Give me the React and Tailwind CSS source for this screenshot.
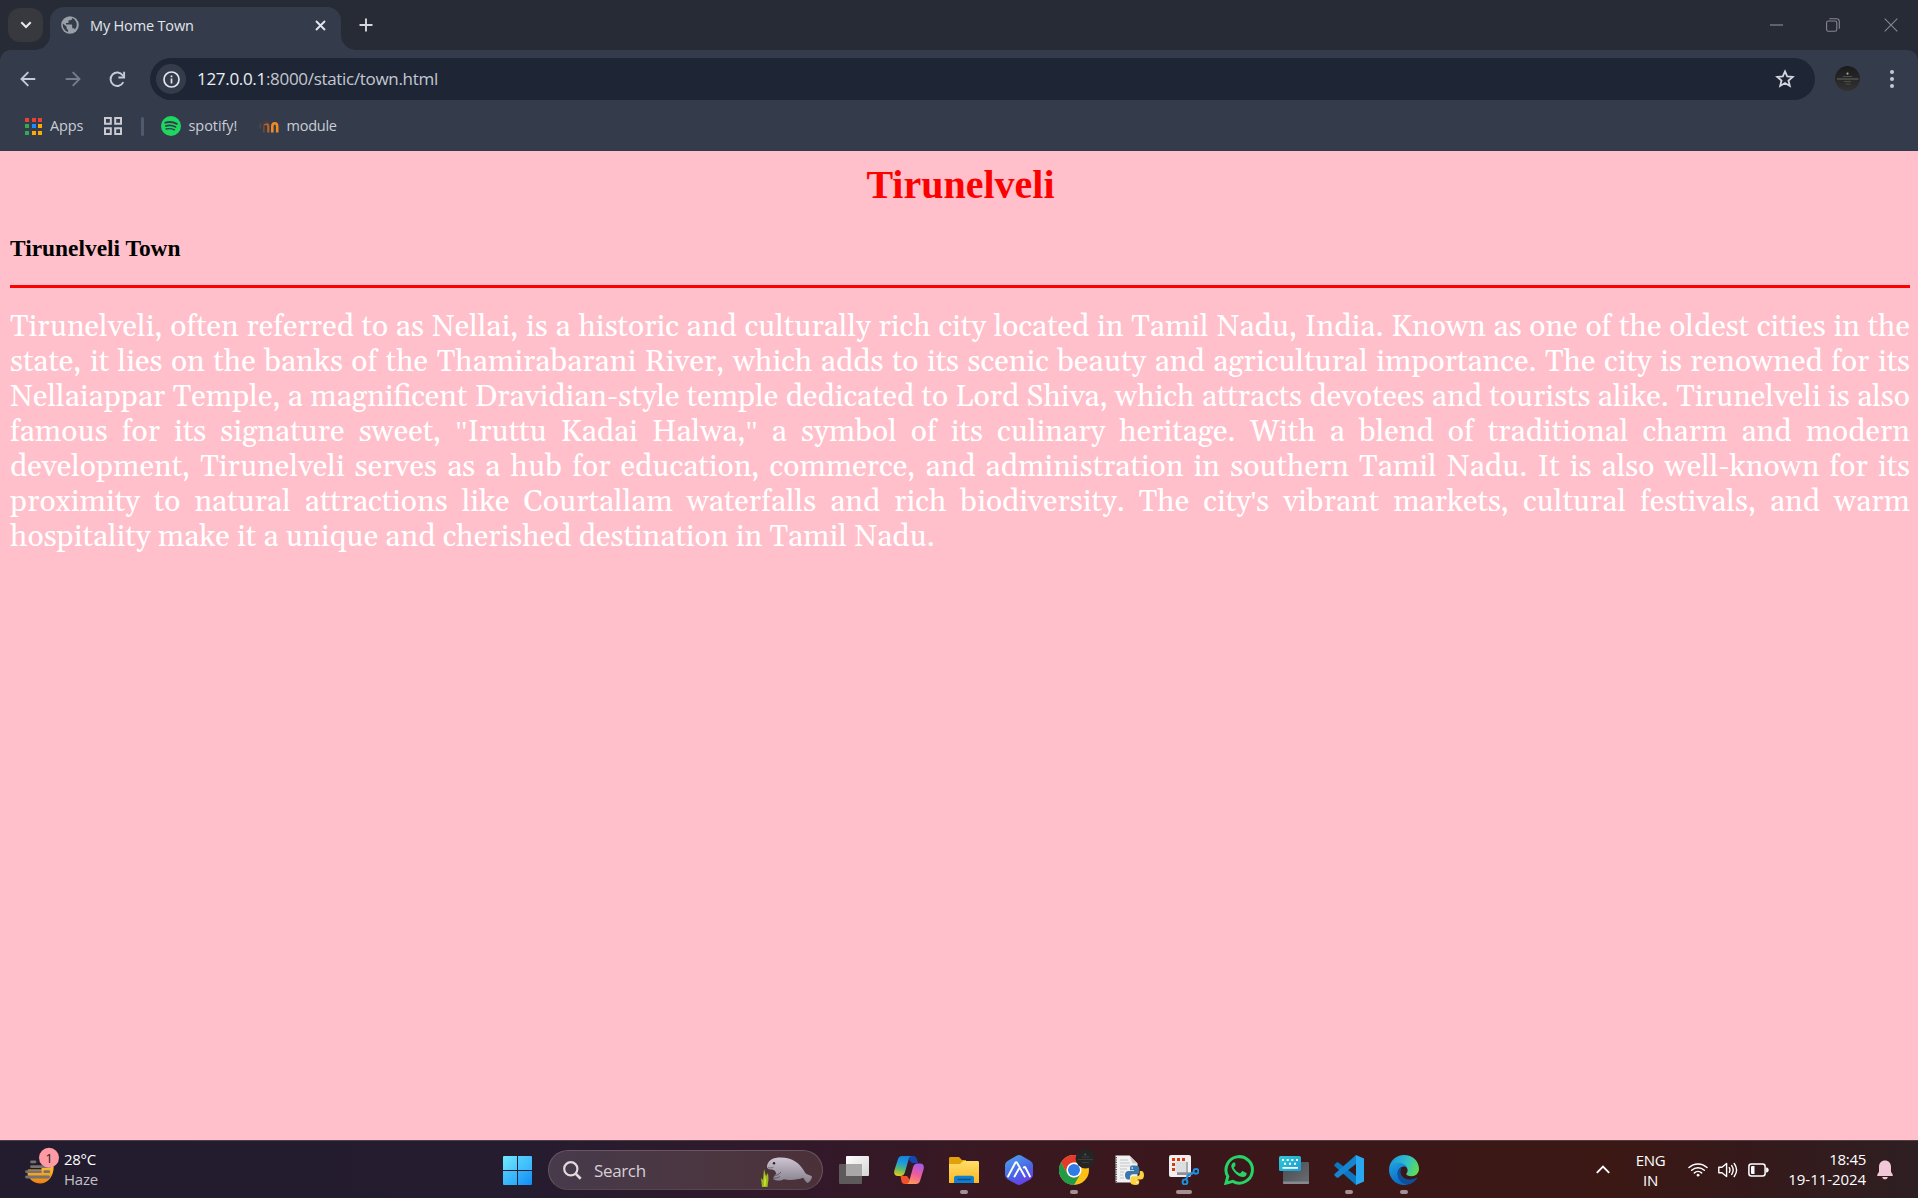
import React from "react";

const UI = "font-['Open_Sans','Noto_Sans',sans-serif] whitespace-nowrap";

function Globe() {
  return (
    <svg width="18" height="18" viewBox="0 0 18 18">
      <circle cx="9" cy="9" r="8.8" fill="#9aa0a6" />
      <path
        d="M2 7.6l3.6 3.2v1.4c0 .9.7 1.4 1.5 1.5v2.4A7.3 7.3 0 0 1 2 7.6zM11.2 2c-.1 1.500-.8 2.200-2 2.200H7.600v1.700c0 .6-.5 1-1.100 1H5v1.700h5c.7 0 1.200.5 1.200 1.200v2.500h1c.8 0 1.500.5 1.700 1.300A7.300 7.300 0 0 0 11.200 2z"
        fill="#343c4c"
      />
    </svg>
  );
}

function TabStrip() {
  return (
    <div className="h-[50px] flex bg-[#262b36] text-[#e3e5ea]">
      <div className="mt-2 ml-2 w-[35px] h-[34px] rounded-[12px] bg-[#38393f] flex items-center justify-center">
        <svg width="12" height="8" viewBox="0 0 12 8" fill="none" stroke="#e6e8ec" strokeWidth="2.1">
          <path d="M1.300 1.200L6 5.900l4.700-4.700" />
        </svg>
      </div>
      <svg width="15" height="15" viewBox="0 0 15 15" className="mt-[35px] -ml-[8px]">
        <path d="M15 0v15H0A15 15 0 0 0 15 0z" fill="#343c4c" />
      </svg>
      <div className="mt-[7px] h-[43px] w-[291px] rounded-t-[14px] bg-[#343c4c] flex items-center pb-[7px]">
        <div className="ml-[11px]">
          <Globe />
        </div>
        <div className={`${UI} ml-[11px] flex-1 text-[14.500px] tracking-[-0.160px] leading-5 mt-px`}>My Home Town</div>
        <svg width="11" height="11" viewBox="0 0 11 11" className="mr-[15px]" stroke="#e3e5ea" strokeWidth="1.900">
          <path d="M1 1l9 9M10 1l-9 9" />
        </svg>
      </div>
      <svg width="15" height="15" viewBox="0 0 15 15" className="mt-[35px]">
        <path d="M0 0v15h15A15 15 0 0 1 0 0z" fill="#343c4c" />
      </svg>
      <svg width="14" height="14" viewBox="0 0 14 14" className="mt-[18px] ml-[3px]" stroke="#d6d8de" strokeWidth="1.900">
        <path d="M7 .5v13M.5 7h13" />
      </svg>
      <div className="ml-auto mt-[17px] flex items-center h-[15px] mr-[20px]">
        <svg width="13" height="2" className="mr-[43px]">
          <path d="M0 1h13" stroke="#85888f" strokeWidth="1.200" />
        </svg>
        <svg width="14" height="14" viewBox="0 0 14 14" fill="none" stroke="#85888f" strokeWidth="1.100" className="mr-[44px]">
          <rect x=".6" y="3" width="10.200" height="10.200" rx="1.800" />
          <path d="M3.300.7h7.200a2.800 2.800 0 0 1 2.800 2.800v7.200" />
        </svg>
        <svg width="14" height="14" viewBox="0 0 14 14" stroke="#85888f" strokeWidth="1.100">
          <path d="M.7.7l12.600 12.600M13.300.7L.7 13.300" />
        </svg>
      </div>
    </div>
  );
}

function AddressRow() {
  return (
    <div className="h-[54px] pt-2 bg-[#343c4c] rounded-t-[11px]">
      <div className="flex items-center h-[42px] w-full">
        <svg width="16" height="16" viewBox="0 0 16 16" fill="none" stroke="#c3cad9" strokeWidth="1.900" className="ml-[19.500px]">
          <path d="M15.300 8H2M8.300 1.200L1.500 8l6.800 6.800" />
        </svg>
        <svg width="16" height="16" viewBox="0 0 16 16" fill="none" stroke="#767d8b" strokeWidth="1.900" className="ml-[29px]">
          <path d="M.7 8H14M7.700 1.200L14.500 8l-6.800 6.800" />
        </svg>
        <svg width="17" height="17" viewBox="0 0 17 17" fill="none" stroke="#c3cad9" strokeWidth="1.900" className="ml-[28.500px]">
          <path d="M14.300 11.200A6.700 6.700 0 1 1 13.700 4.300L15 6" />
          <path d="M15.100.8v5.700H9.400" />
        </svg>
        <div className="ml-[24px] w-[1665px] h-[42px] rounded-full bg-[#1e2636] flex items-center">
          <div className="ml-[6px] w-[30px] h-[30px] rounded-full bg-[#343c4c] flex items-center justify-center">
            <svg width="17" height="17" viewBox="0 0 17 17" fill="none" stroke="#e3e5ea" strokeWidth="1.700">
              <circle cx="8.500" cy="8.500" r="7.500" />
              <path d="M8.500 7.600v4.900M8.500 4.500v1.800" />
            </svg>
          </div>
          <div className={`${UI} ml-[11px] flex-1 text-[17px] tracking-[-0.310px] leading-6 text-[#c4c8d0]`}>
            <span className="text-[#eceef2]">127.0.0.1</span>:8000/static/town.html
          </div>
          <svg width="20" height="20" viewBox="0 0 20 20" fill="none" stroke="#d3d7df" strokeWidth="1.800" className="mr-[20px]">
            <path d="M10 2.400l2.200 5 5.500.5-4.200 3.600 1.300 5.400L10 14l-4.800 2.900 1.300-5.400-4.200-3.600 5.500-.5z" />
          </svg>
        </div>
        <svg width="26" height="26" viewBox="0 0 26 26" className="ml-[20px]">
          <defs>
            <linearGradient id="avatar" x1="0" y1="0" x2="0" y2="1">
              <stop offset="0" stopColor="#1b1b1c" />
              <stop offset="1" stopColor="#323232" />
            </linearGradient>
          </defs>
          <circle cx="12.500" cy="12.500" r="12.500" fill="url(#avatar)" />
          <path d="M2 13h21.500" stroke="#666" strokeWidth="1" />
          <path d="M8 10.500h9M9 15.500h7M10.500 18h5" stroke="#4c4c4c" strokeWidth="1" />
          <circle cx="12.500" cy="7.600" r="1.100" fill="#aaa" />
        </svg>
        <svg width="4" height="18" viewBox="0 0 4 18" fill="#c0c9db" className="ml-[29px]">
          <circle cx="2" cy="2" r="2" />
          <circle cx="2" cy="9" r="2" />
          <circle cx="2" cy="16" r="2" />
        </svg>
      </div>
    </div>
  );
}

const appDots = ["#ea4335", "#ea4335", "#ea4335", "#34a853", "#1a8cff", "#fbab04", "#34a853", "#fbab04", "#fbab04"];

function BookmarksBar() {
  const label = `${UI} text-[14.500px] leading-5 text-[#c9cdd6]`;
  return (
    <div className="h-[47px] flex items-center bg-[#343c4c] pb-[3px] pl-[25px]">
      <div className="grid grid-cols-3 gap-[2.500px] w-[17px] h-[17px]">
        {appDots.map((c, i) => (
          <div key={i} className="w-[4px] h-[4px]" style={{ backgroundColor: c }} />
        ))}
      </div>
      <div className={`${label} ml-[8px] w-[54px] tracking-[-0.150px]`}>Apps</div>
      <svg width="18" height="18" viewBox="0 0 18 18" fill="none" stroke="#c9cad2" strokeWidth="2">
        <path d="M1 1h5.800v5.800H1zM11.200 1H17v5.800h-5.800zM1 11.200h5.800V17H1zM11.200 11.200H17V17h-5.800z" />
      </svg>
      <div className="ml-[19px] w-[3px] h-[19px] rounded-full bg-[#505a6e]" />
      <svg width="20" height="20" viewBox="0 0 20 20" fill="none" stroke="#343c4c" strokeLinecap="round" className="ml-[17px]">
        <circle cx="10" cy="10" r="10" fill="#1ed760" stroke="none" />
        <path d="M4.300 6.700c4-1.200 8-.8 11.500 1.100" strokeWidth="1.900" />
        <path d="M4.700 10c3.500-1 7-.6 9.900 1" strokeWidth="1.600" />
        <path d="M5 13c3-.8 5.900-.5 8.500.9" strokeWidth="1.300" />
      </svg>
      <div className={`${label} ml-[7.500px] w-[70.500px] tracking-[-0.060px]`}>spotify!</div>
      <svg width="20" height="14" viewBox="0 0 20 14" fill="none">
        <path d="M4.800 13.500V6" stroke="#6e4a36" strokeWidth="1.600" />
        <path d="M5 5.600c2.500-1.600 4.300-.6 4.300 2v5.900" stroke="#b5652c" strokeWidth="2.200" />
        <path d="M13.300 13.500V7.400c0-2 .9-3.100 2.400-3.100s2.500 1.100 2.500 3.100v6.100" stroke="#f08a24" strokeWidth="2.600" />
        <path d="M.8 4.500L6.500 1l5 .6-2 2.200-4.600 1.500z" fill="#463a3e" />
        <path d="M1.200 4.500v5" stroke="#62504c" strokeWidth=".9" />
      </svg>
      <div className={`${label} ml-[7.500px] tracking-[-0.250px]`}>module</div>
    </div>
  );
}

function Straight({ children }) {
  return <span className="font-['Liberation_Serif',serif] leading-none">{children}</span>;
}

function Page() {
  return (
    <main className="h-[989px] bg-[#ffc0cb] px-[10px] pt-[11px] font-['Liberation_Serif',serif]">
      <h1 className="h-[46px] text-center text-[40px] leading-[46px] font-bold text-[#ff0000] pl-[3px]">Tirunelveli</h1>
      <h3 className="mt-[27px] h-[27px] text-[23.400px] leading-[27px] font-bold text-black">Tirunelveli Town</h3>
      <div className="mt-[23px] h-[3px] w-[1900px] bg-[#ff0000]" />
      <p className="mt-[22px] w-[1900px] text-justify text-[30px] leading-[35px] text-white font-['Gelasio','Georgia','Liberation_Serif',serif]">
        Tirunelveli, often referred to as Nellai, is a historic and culturally rich city located in Tamil Nadu, India. Known
        as one of the oldest cities in the state, it lies on the banks of the Thamirabarani River, which adds to its scenic
        beauty and agricultural importance. The city is renowned for its Nellaiappar Temple, a magnificent Dravidian-style
        temple dedicated to Lord Shiva, which attracts devotees and tourists alike. Tirunelveli is also famous for its
        signature sweet, <Straight>"</Straight>Iruttu Kadai Halwa,<Straight>"</Straight> a symbol of its culinary heritage.
        With a blend of traditional charm and modern development, Tirunelveli serves as a hub for education, commerce, and
        administration in southern Tamil Nadu. It is also well-known for its proximity to natural attractions like
        Courtallam waterfalls and rich biodiversity. The city<Straight>'</Straight>s vibrant markets, cultural festivals,
        and warm hospitality make it a unique and cherished destination in Tamil Nadu.
      </p>
    </main>
  );
}

function Weather() {
  return (
    <div className="flex w-[503px]">
      <svg width="40" height="40" viewBox="0 0 40 40" className="ml-[23px] mt-[6px]">
        <defs>
          <linearGradient id="sun" x1="0" y1="0" x2="0" y2="1">
            <stop offset="0" stopColor="#f8c030" />
            <stop offset="1" stopColor="#f08010" />
          </linearGradient>
        </defs>
        <path d="M30.700 19.500H18.500v3H5l-.5 4.500c2 6 7 9.500 12.500 9.500 8 0 13.700-7 13.700-17z" fill="url(#sun)" />
        <g stroke="#77716f" strokeWidth="2.800" strokeLinecap="round">
          <path d="M8.500 14.800h3.500M8.500 19.700h18M3.500 24.700h14M21.800 24.700h4M3.500 30h22" />
        </g>
        <circle cx="26" cy="10.800" r="10" fill="#ff99a4" />
        <text x="26" y="15.800" fontSize="13.500" textAnchor="middle" fill="#2a1c20" fontFamily="Open Sans, sans-serif">
          1
        </text>
      </svg>
      <div className={`${UI} ml-px mt-[8px] text-[15px] leading-[20px] text-white tracking-[-0.300px]`}>
        <div>28°C</div>
        <div className="text-[#c4c0c6] tracking-[-0.200px]">Haze</div>
      </div>
    </div>
  );
}

function Manatee() {
  return (
    <svg width="54" height="32" viewBox="0 0 54 32">
      <defs>
        <linearGradient id="seal" x1="0" y1="0" x2="0" y2="1">
          <stop offset="0" stopColor="#cfc4d2" />
          <stop offset="1" stopColor="#83808a" />
        </linearGradient>
      </defs>
      <path
        d="M7 10C8 4 13 1.500 21 1.500c11 0 19 5.500 24 15 1.500 2.500 4.500 2 7 4-.5 3-2 5.500-4.500 6.500-2-1-2.500-3-4.300-5.300-5 1.800-13 3.300-19.500 1.500-2 1.500-7 2-10.500 0 0-2 1.500-4 3-5.500-.5-2.500-2-3.700-4-4.200C9 14 6.500 12.500 7 10z"
        fill="url(#seal)"
      />
      <path d="M14 20c2-1 5-1 7-4M13 22.500c2-.5 5-.5 7-2" stroke="#5d5a66" strokeWidth="1" fill="none" />
      <circle cx="14" cy="7.300" r="1.200" fill="#27232b" />
      <path d="M8 11.500c2 .8 4 .5 5.500-.5" stroke="#77707c" fill="none" />
      <path d="M2 31l-1-9 2 2 1-11 2 7 2-3 .5 6L7.500 31z" fill="#9cb91c" />
      <path d="M4 30l.5-12L6 24l-.5 6z" fill="#d0e23b" />
    </svg>
  );
}

function SearchBox() {
  return (
    <div className="ml-[16px] w-[275px] h-[40px] rounded-full border border-[#6a5564] border-b-[#58454f] bg-[linear-gradient(90deg,#473a4b,#4b3640_60%,#4b3038)] flex items-center">
      <svg width="19" height="19" viewBox="0 0 19 19" fill="none" stroke="#dedade" strokeWidth="2.200" className="ml-[14px]">
        <circle cx="7.800" cy="7.800" r="6.600" />
        <path d="M12.600 12.600L17.700 17.700" strokeWidth="2.700" />
      </svg>
      <div className={`${UI} ml-[12px] mt-px flex-1 text-[17px] leading-6 tracking-[-0.350px] text-[#d6cfd5]`}>Search</div>
      <div className="mr-[8px] mt-[3px]">
        <Manatee />
      </div>
    </div>
  );
}

function TaskViewIcon() {
  return (
    <svg width="30" height="30" viewBox="0 0 30 30">
      <defs>
        <linearGradient id="tv" x1="0" y1="0" x2="1" y2="1">
          <stop offset="0" stopColor="#fff" />
          <stop offset="1" stopColor="#d5d5d5" />
        </linearGradient>
      </defs>
      <rect x="7" y="1" width="23" height="20" rx="1" fill="url(#tv)" />
      <rect x="0" y="9" width="23" height="20" rx="1" fill="#5e5a5c" />
      <rect x="7" y="9" width="16" height="12" fill="#a9a7a8" />
    </svg>
  );
}

function CopilotIcon() {
  return (
    <svg width="30" height="30" viewBox="0 0 30 30">
      <defs>
        <linearGradient id="cpA" x1=".5" y1="0" x2=".3" y2="1">
          <stop offset="0" stopColor="#1583d8" />
          <stop offset=".35" stopColor="#1f9be0" />
          <stop offset=".65" stopColor="#55b870" />
          <stop offset="1" stopColor="#e8c81c" />
        </linearGradient>
        <linearGradient id="cpB" x1=".6" y1="0" x2=".3" y2="1">
          <stop offset="0" stopColor="#a65be8" />
          <stop offset=".5" stopColor="#ee5b9c" />
          <stop offset="1" stopColor="#ff9a5a" />
        </linearGradient>
      </defs>
      <path d="M16 1h3.500c1.700 0 2.500 1 3 2.500L24 8h-6l-3-3z" fill="#1547b4" />
      <path d="M14 29h-3.500c-1.700 0-2.500-1-3-2.500L6.500 21H13l3 4z" fill="#f0502c" />
      <path d="M8 1h10c-2 0-2.800 1.500-3.400 3.500L11 17c-.8 2.500-2 4-4.500 4H4c-3.500 0-4.500-2.500-3.500-6L4 4C4.700 2 6 1 8 1z" fill="url(#cpA)" />
      <path d="M22 29H12c2 0 2.800-1.500 3.400-3.500L19 12.500C19.800 10 21 8.500 23.500 8.500H26c3.500 0 4.500 2.500 3.500 6L26 26c-.7 2-2 3-4 3z" fill="url(#cpB)" />
    </svg>
  );
}

function FolderIcon() {
  return (
    <svg width="30" height="30" viewBox="0 0 30 30">
      <defs>
        <linearGradient id="fold" x1="0" y1="0" x2="0" y2="1">
          <stop offset="0" stopColor="#ffdc6a" />
          <stop offset="1" stopColor="#fbb920" />
        </linearGradient>
      </defs>
      <path d="M0 3.500C0 2.500.7 2 1.500 2H10l3 3h4v8H0z" fill="#e2a10a" />
      <path d="M0 9h11l3-3h14.500c1 0 1.500.7 1.500 1.500V28H0z" fill="url(#fold)" />
      <path d="M5 28v-5c0-1.500 1-2.300 2.300-2.300h15.400C24 20.700 25 21.500 25 23v5z" fill="#0f80d0" />
      <path d="M9 24.500h12.500" stroke="#0a508c" strokeWidth="1.300" strokeLinecap="round" />
    </svg>
  );
}

function HexIcon() {
  return (
    <svg width="30" height="30" viewBox="0 0 30 30">
      <defs>
        <linearGradient id="hex" x1=".2" y1="0" x2=".7" y2="1">
          <stop offset="0" stopColor="#4ca0ee" />
          <stop offset=".6" stopColor="#4b62e4" />
          <stop offset="1" stopColor="#6b3be8" />
        </linearGradient>
      </defs>
      <path d="M12.500.8a5 5 0 0 1 5 0L26.500 6A5 5 0 0 1 29 10v10a5 5 0 0 1-2.500 4.200l-9 5a5 5 0 0 1-5 0l-9-5A5 5 0 0 1 1 20V10a5 5 0 0 1 2.500-4z" fill="url(#hex)" />
      <path d="M4 21.500L11.200 8q1-1.700 2 0L20.800 21.500M10.500 21.500l4.200-7.500M19.800 12.500q.8-1.300 1.600 0L26 21.500" fill="none" stroke="#fff" strokeWidth="1.900" strokeLinecap="round" />
    </svg>
  );
}

function ChromeIcon() {
  return (
    <svg width="36" height="36" viewBox="0 0 36 36" className="-mt-[6px] -mr-[6px] max-w-none">
      <g transform="translate(0 6)">
        <circle cx="15" cy="15" r="15" fill="#fbc116" />
        <path d="M2 7.500A15 15 0 0 1 28 7.500H15A7.500 7.500 0 0 0 8.500 18.700z" fill="#e33b2e" />
        <path d="M2 7.500L8.500 18.700A7.500 7.500 0 0 0 21.500 18.750L15 30A15 15 0 0 1 2 7.500z" fill="#229a48" />
        <circle cx="15" cy="15" r="7.500" fill="#fff" />
        <circle cx="15" cy="15" r="6" fill="#2f7bea" />
      </g>
      <circle cx="26.300" cy="9.700" r="9.700" fill="#252525" />
      <path d="M19 10.500h15M22.500 8h8M23 13.500h7" stroke="#3c3c3c" strokeWidth="1" />
      <circle cx="26.300" cy="5.500" r="1" fill="#555" />
    </svg>
  );
}

function PythonFileIcon() {
  return (
    <svg width="30" height="30" viewBox="0 0 30 30">
      <path d="M1.500.5h14l8 8V27.500h-22z" fill="#f1f1f1" />
      <path d="M15.500.5l8 8h-5z" fill="#c8c8c8" />
      <path d="M2 2v25" stroke="#55555a" strokeWidth="2" strokeDasharray="1.200 1.200" />
      <path d="M6 5h8M6 8h10M6 11h14M6 14h7M6 17h4M6 20h3M6 23h4" stroke="#c4c6ca" strokeWidth="1" />
      <path d="M19.500 10.500c-3 0-3.500 1.300-3.500 2.800v2h4v.8h-5.500c-2 0-3.500 1.400-3.500 4.200 0 2.700 1.300 4.200 3 4.200h2v-2.300c0-1.700 1.300-3 3-3h4c1.300 0 2.300-1 2.300-2.400v-3.500c0-1.700-1.800-2.800-3.800-2.800z" fill="#3a78ab" />
      <circle cx="18.200" cy="13" r=".8" fill="#fff" />
      <path d="M21.500 30c3 0 3.700-1.300 3.700-2.800v-2h-4v-.8h5.500c2 0 3.300-1.400 3.300-4.200 0-2.700-1.100-4.200-2.800-4.200h-1.400v2.300c0 1.700-1.300 3-3 3h-4c-1.300 0-2.300 1-2.300 2.400v3.500c0 1.700 1.900 2.800 5 2.800z" fill="#fdd23f" />
      <circle cx="23" cy="27.500" r=".8" fill="#fff" />
    </svg>
  );
}

function SnipIcon() {
  return (
    <svg width="30" height="30" viewBox="0 0 30 30">
      <rect x="0" y="0" width="22" height="22" rx="2" fill="#efefef" />
      <rect x="6.500" y="6.500" width="11" height="11" fill="#dcdfe2" />
      <g fill="#d63b0b">
        <path d="M3 3h3v3H3zM8 3h3v3H8zM13 3h3v3h-3zM3 8h3v3H3zM3 13h3v3H3z" />
      </g>
      <path d="M17 7h2v14l-2 4z" fill="#a9adb1" />
      <path d="M8 17.300h14l3 .2-2 2.500H8z" fill="#8a9096" />
      <g fill="none" stroke="#1b8fe0" strokeWidth="2">
        <circle cx="27" cy="16.300" r="2.400" />
        <circle cx="16" cy="27" r="2.400" />
        <path d="M24.800 17.500L19 20.500l-2.200 4.300" />
      </g>
    </svg>
  );
}

function WhatsAppIcon() {
  return (
    <svg width="30" height="30" viewBox="0 0 30 30">
      <path d="M2 28.200l1.800-6.700A13.200 13.200 0 1 1 8.800 26.400z" fill="none" stroke="#25d366" strokeWidth="3" />
      <path
        d="M11.300 8.200c-.3-.7-.6-.7-1-.7-1 0-1.500.3-2 1-.8.900-1.200 2-.9 3.500.4 2 2.200 4.700 4.500 6.700 2.500 2.200 5.300 3.500 7.300 3.300 1.600-.2 3-1.200 3.300-2.500.2-.9.200-1.400-.1-1.600l-3.500-1.700c-.5-.2-.8-.1-1.100.3l-1.300 1.600c-.3.3-.6.3-1 .1-2.300-1-4.300-2.800-5.500-5-.2-.4-.1-.7.1-.9l1.200-1.500c.2-.3.200-.6.100-.9z"
        fill="#25d366"
      />
    </svg>
  );
}

function KeyboardIcon() {
  return (
    <svg width="30" height="30" viewBox="0 0 30 30">
      <defs>
        <linearGradient id="pad" x1="0" y1="0" x2="1" y2="1">
          <stop offset="0" stopColor="#47494d" />
          <stop offset="1" stopColor="#6a6f74" />
        </linearGradient>
        <linearGradient id="keys" x1="0" y1="0" x2="1" y2="1">
          <stop offset="0" stopColor="#30c9d6" />
          <stop offset="1" stopColor="#1a9bd7" />
        </linearGradient>
      </defs>
      <rect x="4" y="7" width="26" height="22" rx="1.300" fill="url(#pad)" />
      <path d="M4 26.500h26v1.200a1.300 1.300 0 0 1-1.300 1.300H5.300A1.300 1.300 0 0 1 4 27.700z" fill="#868a8e" />
      <rect x="0" y="1" width="22" height="15" rx="1.500" fill="url(#keys)" />
      <path d="M3 4h2v2H3zM7.700 4h2v2h-2zM12.300 4h2v2h-2zM17 4h2v2h-2zM5 7.700h2v2H5zM10 7.700h2v2h-2zM15 7.700h2v2h-2zM3.500 12h15.500v1.800H3.500z" fill="#fff" />
    </svg>
  );
}

function VsCodeIcon() {
  return (
    <svg width="30" height="30" viewBox="0 0 30 30">
      <path d="M22 30L.8 11.200q-1-1 0-2L2.600 7.600q.9-.7 1.800 0L22 21z" fill="#0b78c4" />
      <path d="M22 0L.8 18.800q-1 1 0 2l1.800 1.600q.9.700 1.800 0L22 9z" fill="#1585d0" />
      <path d="M22 0L30 3.500V26.500L22 30z" fill="#28a8f0" />
    </svg>
  );
}

function EdgeIcon() {
  return (
    <svg width="30" height="30" viewBox="0 0 24 24">
      <defs>
        <linearGradient id="edTop" x1="0" y1=".3" x2="1" y2=".6">
          <stop offset="0" stopColor="#1f96dc" />
          <stop offset=".55" stopColor="#2fc0c8" />
          <stop offset="1" stopColor="#62dc50" />
        </linearGradient>
        <linearGradient id="edLow" x1="0" y1="0" x2=".4" y2="1">
          <stop offset="0" stopColor="#1fa0e4" />
          <stop offset="1" stopColor="#0c6cc0" />
        </linearGradient>
      </defs>
      <path d="M.1 10.600C.8 4.600 5.700 0 12 0c6.800 0 12 5 12 11 0 3.600-2.700 6-6 6-2.500 0-4.200-.9-4.200-1.800 0-.6 1.100-1.200 1.100-3 0-2.700-2.600-4.900-6.300-4.900-4 0-7 1.500-8.500 3.300z" fill="url(#edTop)" />
      <path d="M0 11.500C.5 8.500 3.700 6.200 7.600 6.200c3.300 0 6 1.600 7 4-1-.9-2.400-1.200-3.800-.9C8.200 10 7 12 7 14.600c0 4.300 3.300 8 7.500 8.900-.8.300-1.600.5-2.500.5C5.300 24 0 18.600 0 12z" fill="url(#edLow)" />
      <path d="M9.600 11.300c-1.500 3.700 1.500 8.200 6.900 8.200 2 0 3.900-.6 5.300-1.400.5-.3.9.1.600.6A12 12 0 0 1 14.500 23.700C9.500 22.800 6.800 19 6.800 15c0-2.400 1.300-4.200 2.800-5z" fill="#0f4f9c" />
    </svg>
  );
}

const apps = [
  { icon: TaskViewIcon, mark: "" },
  { icon: CopilotIcon, mark: "" },
  { icon: FolderIcon, mark: "w-[8px]" },
  { icon: HexIcon, mark: "" },
  { icon: ChromeIcon, mark: "w-[8px]" },
  { icon: PythonFileIcon, mark: "" },
  { icon: SnipIcon, mark: "w-[16px]" },
  { icon: WhatsAppIcon, mark: "" },
  { icon: KeyboardIcon, mark: "" },
  { icon: VsCodeIcon, mark: "w-[8px]" },
  { icon: EdgeIcon, mark: "w-[8px]" },
];

function Tray() {
  const text = `${UI} text-[15px] leading-[20px] text-white`;
  return (
    <div className="ml-auto flex items-center mr-[25px] h-full">
      <svg width="14" height="9" viewBox="0 0 14 9" fill="none" stroke="#fff" strokeWidth="1.900" className="mr-[25px]">
        <path d="M.8 7.800L7 1.600l6.200 6.200" />
      </svg>
      <div className={`${text} w-[31px] text-center tracking-[-0.300px] mr-[22px] text-[14.500px]`}>
        <div>ENG</div>
        <div>IN</div>
      </div>
      <svg width="20" height="15" viewBox="0 0 20 15" fill="none" stroke="#fff" strokeWidth="1.500" strokeLinecap="round" className="mr-[10px]">
        <path d="M1 5.500a13 13 0 0 1 18 0M3.700 8.200a9.200 9.200 0 0 1 12.600 0M6.400 10.900a5.300 5.300 0 0 1 7.200 0" />
        <circle cx="10" cy="13.200" r="1.100" fill="#fff" strokeWidth=".6" />
      </svg>
      <svg width="20" height="18" viewBox="0 0 20 18" fill="none" stroke="#fff" strokeWidth="1.400" strokeLinejoin="round" strokeLinecap="round" className="mr-[10px]">
        <path d="M.8 6.300H4l4.600-3.800v13L4 11.700H.8z" />
        <path d="M11.300 6.700q1.300 2.300 0 4.600M13.700 4.600q3 4.400 0 8.800M16.200 2.500q4.800 6.500 0 13" />
      </svg>
      <svg width="21" height="14" viewBox="0 0 21 14" fill="none" stroke="#fff" strokeWidth="1.500" className="mr-[19px]">
        <rect x=".9" y=".9" width="16.200" height="12" rx="2.500" />
        <path d="M3 4q0-1 1-1h2.500v8H4q-1 0-1-1z" fill="#fff" stroke="none" />
        <path d="M18.500 4.800q1.800 0 1.800 2.200t-1.800 2.200z" fill="#fff" strokeWidth=".8" />
      </svg>
      <div className={`${text} text-right w-[78px] tracking-[-0.060px] mr-[11px] mb-[2px]`}>
        <div className="tracking-[-0.300px]">18:45</div>
        <div>19-11-2024</div>
      </div>
      <svg width="16" height="20" viewBox="0 0 16 20" fill="#f0c8d8">
        <path d="M8 .5c3.600 0 6 2.700 6 6.200v5l1.800 3c.3.700 0 1.300-.8 1.300H1c-.8 0-1.100-.6-.8-1.300l1.800-3v-5C2 3.200 4.400.5 8 .5zM5.200 17h5.600c-.3 1.400-1.400 2.300-2.800 2.300S5.500 18.400 5.200 17z" />
      </svg>
    </div>
  );
}

function Taskbar() {
  return (
    <div className="h-[58px] flex border-t border-[#4e3f48] bg-[linear-gradient(90deg,#221c2e_0%,#251c2f_27%,#32192a_42%,#3a1820_53%,#3b1719_68%,#3b1814_84%,#35191a_91%,#2e1f22_100%)]">
      <Weather />
      <div className="grid grid-cols-2 gap-px w-[29px] h-[29px] mt-[15px] rounded-[1px] overflow-hidden">
        <div className="bg-linear-to-br from-[#6eeafe] to-[#4cc5fb]" />
        <div className="bg-linear-to-br from-[#52cffc] to-[#36b4fb]" />
        <div className="bg-linear-to-br from-[#4bc8fb] to-[#2aa9f8]" />
        <div className="bg-linear-to-br from-[#35b1fa] to-[#0f8ff5]" />
      </div>
      <div className="mt-[9px]">
        <SearchBox />
      </div>
      <div className="flex ml-[3px]">
        {apps.map(({ icon: Icon, mark }, i) => (
          <div key={i} className="w-[55px] pt-[14px] flex flex-col items-center">
            <div className="w-[30px] h-[30px]">
              <Icon />
            </div>
            {mark && <div className={`${mark} h-[4px] mt-[5px] rounded-full bg-[#a48f94]`} />}
          </div>
        ))}
      </div>
      <Tray />
    </div>
  );
}

export default function App() {
  return (
    <div className="w-[1918px] h-[1198px] overflow-hidden flex flex-col bg-[#262b36]">
      <TabStrip />
      <AddressRow />
      <BookmarksBar />
      <Page />
      <Taskbar />
    </div>
  );
}
